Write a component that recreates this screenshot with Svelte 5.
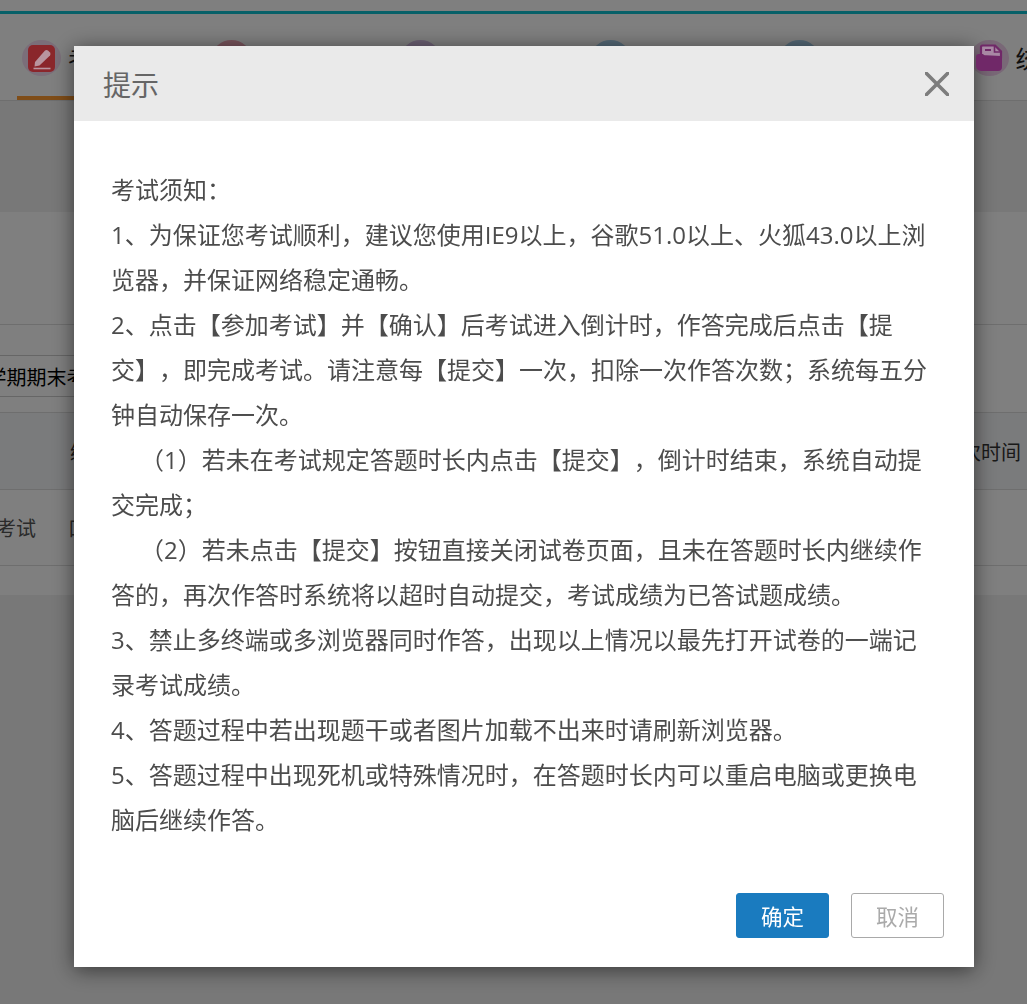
<script>
  const tabs = [
    { label: '考试', glow: '#f6dcf2', icon: 'pen' },
    { label: '作业', glow: '#f0a8b8' },
    { label: '讨论', glow: '#d8c0e8' },
    { label: '资料', glow: '#a8d0ec' },
    { label: '课件', glow: '#a8d0ec' },
    { label: '统计', glow: '#f3d0ee', icon: 'folder' },
  ];

  const notice = [
    { text: '考试须知：' },
    { text: '1、为保证您考试顺利，建议您使用IE9以上，谷歌51.0以上、火狐43.0以上浏览器，并保证网络稳定通畅。' },
    { text: '2、点击【参加考试】并【确认】后考试进入倒计时，作答完成后点击【提交】，即完成考试。请注意每【提交】一次，扣除一次作答次数；系统每五分钟自动保存一次。' },
    { text: '（1）若未在考试规定答题时长内点击【提交】，倒计时结束，系统自动提交完成；', indent: true },
    { text: '（2）若未点击【提交】按钮直接关闭试卷页面，且未在答题时长内继续作答的，再次作答时系统将以超时自动提交，考试成绩为已答试题成绩。', indent: true },
    { text: '3、禁止多终端或多浏览器同时作答，出现以上情况以最先打开试卷的一端记录考试成绩。' },
    { text: '4、答题过程中若出现题干或者图片加载不出来时请刷新浏览器。' },
    { text: '5、答题过程中出现死机或特殊情况时，在答题时长内可以重启电脑或更换电脑后继续作答。' },
  ];
</script>

<div class="page">
  <div class="topbar"></div>
  <nav class="tabs">
    {#each tabs as tab, i}
      <div class="tab" class:active={i === 0}>
        <span class="tab-icon" style:background={tab.glow}>
          {#if tab.icon === 'pen'}
            <svg class="glyph" width="27" height="27" viewBox="0 0 27 27">
              <rect width="27" height="27" rx="5" fill="#8a262b"/>
              <path d="M7 17 L17 5.5 Q18.5 4.5 20 5.5 L22 7.5 Q23 9 22 10.5 L11.5 20.5 L6.5 21.5 Z" fill="#b8959f"/>
              <path d="M5.5 23.5 H22.5" stroke="#b8959f" stroke-width="1.6"/>
            </svg>
          {:else if tab.icon === 'folder'}
            <svg class="glyph" width="28" height="28" viewBox="0 0 28 28">
              <path d="M6 12 V3 a1.5 1.5 0 0 1 1.5-1.5 H20 L26 7.5 V13 Z" fill="#a888a4" stroke="#702868" stroke-width="2.2"/>
              <path d="M10 6 H16" stroke="#702868" stroke-width="2"/>
              <path d="M19.5 2 V8 H25.5" stroke="#702868" stroke-width="1.6" fill="none"/>
              <path d="M1 13 a3 3 0 0 1 3-3 H8 L11 13 H27 V23 a4 4 0 0 1-4 4 H6 a5 5 0 0 1-5-5 Z" fill="#702868"/>
            </svg>
          {/if}
        </span>
        <span class="tab-label">{tab.label}</span>
      </div>
    {/each}
  </nav>
  <div class="band"></div>
  <div class="panel"></div>
  <div class="name-row"><span class="name">2021学年第一学期期末考试</span></div>
  <div class="head-row">
    <span>编号</span>
    <span>最近一次时间</span>
  </div>
  <div class="data-row"><span>期末考试</span><span>口</span></div>
  <div class="foot-row"></div>
</div>

<div class="overlay">
  <div class="modal">
    <header class="modal-head">
      <h2>提示</h2>
      <button class="close" aria-label="关闭">
        <svg width="24" height="24" viewBox="0 0 24 24"><path d="M0 0 L24 24 M24 0 L0 24" stroke="#7d7d7d" stroke-width="3.6" fill="none"/></svg>
      </button>
    </header>
    <div class="modal-body">
      {#each notice as line}
        <p class:indent={line.indent}>{line.text}</p>
      {/each}
    </div>
    <footer class="modal-foot">
      <button class="btn primary">确定</button>
      <button class="btn ghost">取消</button>
    </footer>
  </div>
</div>

<style>
  :global(body) {
    margin: 0;
    background: #fff;
  }

  .page {
    height: 1004px;
    overflow: hidden;
    background: #f1f1f1;
    color: #333;
    font-family: "Noto Sans CJK SC", sans-serif;
  }

  .topbar {
    height: 14px;
    box-sizing: border-box;
    background: #fff;
    border-bottom: 3px solid #0fc0d0;
  }

  .tabs {
    display: flex;
    height: 87px;
    box-sizing: border-box;
    padding-left: 17px;
    background: #fff;
    border-bottom: 1px solid #ddd;
    overflow: hidden;
  }

  .tab {
    flex: none;
    width: 189.5px;
    height: 86px;
    display: flex;
    align-items: flex-start;
    gap: 7px;
    padding: 26px 0 0 5px;
    box-sizing: border-box;
    font-size: 24px;
    line-height: 36px;
    color: #222;
    border-bottom: 4px solid transparent;
  }

  .tab.active {
    border-bottom-color: #ff9a30;
  }

  .tab-icon {
    flex: none;
    width: 39px;
    height: 36px;
    border-radius: 50%;
    display: flex;
    align-items: center;
    justify-content: center;
  }

  /* first and last icons stay bright through the dim layer */
  .glyph {
    position: relative;
    z-index: 11;
    flex: none;
  }

  .band {
    height: 111px;
    background: #f1f1f1;
  }

  .panel {
    height: 113px;
    box-sizing: border-box;
    background: #fff;
    border-bottom: 1px solid #ddd;
  }

  .modal-body p {
    margin: 0;
  }

  .name-row {
    height: 88px;
    box-sizing: border-box;
    padding-top: 30px;
    background: #fff;
    border-bottom: 1px solid #ddd;
    display: flex;
    align-items: flex-start;
    overflow: hidden;
    font-size: 20px;
  }

  .name {
    flex: none;
    height: 42px;
    box-sizing: border-box;
    line-height: 42px;
    margin-left: -138px;
    padding: 0 20px 0 0;
    border-top: 1px solid #ccc;
    border-bottom: 1px solid #ccc;
    color: #000;
    white-space: nowrap;
  }

  .head-row {
    height: 77px;
    box-sizing: border-box;
    background: #f5f6f8;
    border-bottom: 1px solid #ddd;
    display: flex;
    justify-content: space-between;
    align-items: center;
    padding: 0 6px 0 70px;
    font-size: 20px;
    white-space: nowrap;
  }

  .data-row {
    height: 76px;
    box-sizing: border-box;
    background: #fff;
    border-bottom: 1px solid #ddd;
    display: flex;
    align-items: center;
    gap: 32px;
    margin-left: -44px;
    font-size: 20px;
    color: #555;
  }

  .foot-row {
    height: 29px;
    background: #fff;
  }

  .overlay {
    position: fixed;
    inset: 0;
    background: rgba(0, 0, 0, 0.5);
    z-index: 10;
  }

  .modal {
    position: absolute;
    left: 74px;
    top: 46px;
    width: 900px;
    height: 921px;
    display: flex;
    flex-direction: column;
    background: #fff;
    box-shadow: 0 3px 20px rgba(0, 0, 0, 0.55);
  }

  .modal-head {
    height: 75px;
    flex: none;
    display: flex;
    align-items: center;
    justify-content: space-between;
    padding: 0 25px 0 29px;
    background: #eaeaea;
  }

  .modal-head h2 {
    margin: 0;
    font-size: 28px;
    font-weight: 400;
    color: #666;
    font-family: "Noto Sans CJK SC", sans-serif;
  }

  .close {
    border: 0;
    padding: 0;
    background: none;
    display: flex;
  }

  .modal-body {
    flex: 1;
    padding: 46px 38px 0 37px;
    font-size: 24px;
    line-height: 45px;
    color: #4c4c4c;
    font-family: "Open Sans", "Noto Sans CJK SC", sans-serif;
    text-spacing-trim: space-all;
  }

  .modal-body .indent {
    text-indent: 29px;
  }

  .modal-foot {
    display: flex;
    justify-content: flex-end;
    gap: 22px;
    padding: 0 30px 29px;
  }

  .btn {
    width: 93px;
    height: 45px;
    border-radius: 3px;
    font-size: 21.5px;
    font-family: "Noto Sans CJK SC", sans-serif;
    box-sizing: border-box;
  }

  .primary {
    background: #1a7bbf;
    border: 1px solid #1a7bbf;
    color: #fff;
  }

  .ghost {
    background: #fff;
    border: 1px solid #a9a9a9;
    color: #aaa;
  }
</style>
